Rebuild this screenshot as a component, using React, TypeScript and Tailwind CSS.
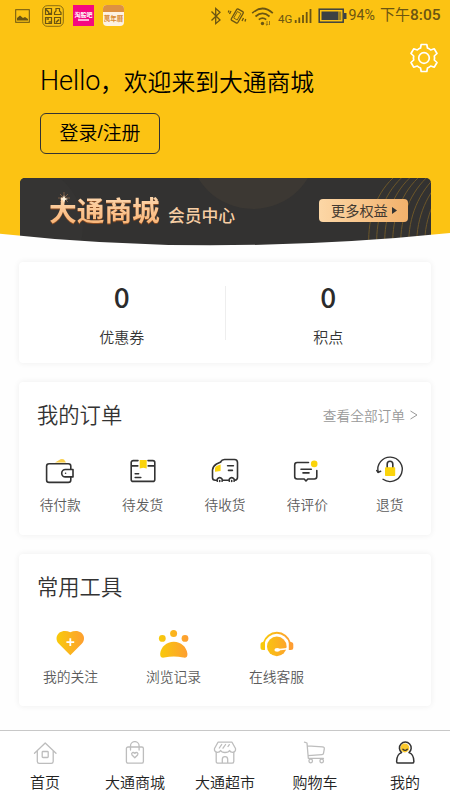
import type { ReactNode } from "react";

const INK = "#333";
const YELLOW = "#fbd40b";

type Item = { label: string; icon: ReactNode };

function OrderIcon({ children }: { children: ReactNode }) {
  return (
    <svg width="32" height="32" viewBox="0 0 32 32" fill="none" stroke={INK} strokeWidth="1.6" strokeLinecap="round" strokeLinejoin="round">
      {children}
    </svg>
  );
}

function ToolIcon({ id, children }: { id: string; children: ReactNode }) {
  return (
    <svg width="36" height="32" viewBox="0 0 36 32" fill={`url(#${id})`}>
      <defs>
        <linearGradient id={id} x1="3" y1="0" x2="33" y2="0" gradientUnits="userSpaceOnUse">
          <stop offset="0" stopColor="#f8cb0a" />
          <stop offset="1" stopColor="#fe9c33" />
        </linearGradient>
      </defs>
      {children}
    </svg>
  );
}

function NavIcon({ color = "#bdbdbd", children }: { color?: string; children: ReactNode }) {
  return (
    <svg width="24" height="24" viewBox="0 0 24 24" fill="none" stroke={color} strokeWidth="1.3" strokeLinecap="round" strokeLinejoin="round">
      {children}
    </svg>
  );
}

const orders: Item[] = [
  {
    label: "待付款",
    icon: (
      <OrderIcon>
        <path d="M11 7.6 16.5 4.2Q18.5 3.4 20 4.6L22 7.6Z" fill="#f9cf4c" stroke="none" />
        <rect x="2.6" y="8.8" width="24.2" height="18.6" rx="2.5" />
        <path d="M29 14.5H21.4a3.7 3.7 0 0 0 0 7.4H29Z" fill="#fff" />
        <circle cx="21.6" cy="18.2" r="0.8" fill={INK} stroke="none" />
      </OrderIcon>
    ),
  },
  {
    label: "待发货",
    icon: (
      <OrderIcon>
        <path d="M11 5.6H6.2a2 2 0 0 0-2 2v16.8a2 2 0 0 0 2 2h19.6a2 2 0 0 0 2-2V7.6a2 2 0 0 0-2-2H21M4.2 10.9H10.8M21.2 10.9H27.8" />
        <path d="M12.7 5H19.7V13.6L16.2 12.8L12.7 13.6Z" fill={YELLOW} stroke="none" />
        <path d="M8.2 18.7h3.4M8.2 22.5h5.6" />
      </OrderIcon>
    ),
  },
  {
    label: "待收货",
    icon: (
      <OrderIcon>
        <path d="M11.6 9.6V16L6 16.8V13Q6.6 11 11.6 9.6Z" fill={YELLOW} stroke="none" />
        <path d="M7.5 25.3H6.3a2.8 2.8 0 0 1-2.8-2.8V15Q4 11 7.5 9L11.8 7V6.7Q12.8 4.5 15.5 4.5H25.5a3 3 0 0 1 3 3V22.3a3 3 0 0 1-2.6 3M13.8 25.3H19.6" />
        <path d="M8.3 26.2a2.6 2.6 0 1 1 4.8 0M20.3 26.2a2.6 2.6 0 1 1 4.8 0" />
        <path d="M10.7 25.5v1M22.7 25.5v1M18.6 10.7h5.8M19.5 15.4h3.9" />
      </OrderIcon>
    ),
  },
  {
    label: "待评价",
    icon: (
      <OrderIcon>
        <path d="M17.5 7.5H6.2a2.5 2.5 0 0 0-2.5 2.5V21.5a2.5 2.5 0 0 0 2.5 2.5H13.2L15 26L16.8 24H23.3a2.5 2.5 0 0 0 2.5-2.5V15.6" />
        <path d="M10 14.3H20.3M12 17.9H18" />
        <circle cx="23.2" cy="8.9" r="3.3" fill={YELLOW} stroke="none" />
      </OrderIcon>
    ),
  },
  {
    label: "退货",
    icon: (
      <OrderIcon>
        <path d="M4.2 17.3A12.2 12.2 0 1 1 9 24.3" strokeWidth="1.4" />
        <path d="M2.8 15.6 4.3 17.4 6.6 16.3" />
        <path d="M13.2 12.5V9a2.8 2.8 0 0 1 5.6 0V12.5" />
        <rect x="11" y="12.3" width="10.2" height="8.8" rx="0.8" fill={YELLOW} stroke="none" />
      </OrderIcon>
    ),
  },
];

const tools: Item[] = [
  {
    label: "我的关注",
    icon: (
      <ToolIcon id="heart">
        <path d="M17.3 4.2C13.8 2.6 9.5 2.4 6.5 4.6C3 7.4 2.5 12.3 5.6 15.5L17.3 27.3L29 15.5C32.1 12.3 31.6 7.4 28.1 4.6C25.1 2.4 20.8 2.6 17.3 4.2Z" />
        <path d="M17.3 10.2v7.8M13.4 14.1h7.8" stroke="#fff" strokeWidth="1.8" />
      </ToolIcon>
    ),
  },
  {
    label: "浏览记录",
    icon: (
      <ToolIcon id="paw">
        <circle cx="6.3" cy="10.4" r="3.4" />
        <circle cx="17.6" cy="5.4" r="3.5" />
        <circle cx="29" cy="10.4" r="3.4" />
        <path d="M17.8 13.7C10.5 13.7 5 18.8 4.2 25.5C3.9 28.8 5.4 30 8.3 29.6Q17.8 27.3 27.3 29.6C30.3 30 31.8 28.8 31.4 25.5C30.5 18.8 25 13.7 17.8 13.7Z" />
      </ToolIcon>
    ),
  },
  {
    label: "在线客服",
    icon: (
      <ToolIcon id="service">
        <circle cx="17.8" cy="18.4" r="9.8" />
        <path d="M4.7 15A13.6 13.6 0 0 1 31 15" fill="none" stroke="url(#service)" strokeWidth="2" />
        <path d="M6 14H4Q1.5 14 1.5 16.5V19.5Q1.5 22 4 22H6ZM29.8 14H31.8Q34.3 14 34.3 16.5V19.5Q34.3 22 31.8 22H29.8Z" />
        <path d="M18 21 28 20.1V21.4L18 22.8Z" fill="#fff" />
        <ellipse cx="18.2" cy="21.9" rx="2.8" ry="1.8" fill="#fff" />
      </ToolIcon>
    ),
  },
];

const tabs: Item[] = [
  {
    label: "首页",
    icon: (
      <NavIcon>
        <path d="M1.5 12.2 12.2 2 23 12.2M4.3 10V20.5a1.8 1.8 0 0 0 1.8 1.8H18.4a1.8 1.8 0 0 0 1.8-1.8V10" />
        <rect x="9.2" y="10.5" width="6" height="6" rx="0.8" />
      </NavIcon>
    ),
  },
  {
    label: "大通商城",
    icon: (
      <NavIcon>
        <rect x="3.4" y="6" width="17" height="16.2" rx="1.6" />
        <path d="M7.5 9V4.9a4.3 4.3 0 0 1 8.6 0V9" />
        <path d="M11.8 16.8 9 14Q8.1 12.5 9.3 11.7Q10.8 11 11.8 12.4Q12.8 11 14.3 11.7Q15.5 12.5 14.6 14Z" />
      </NavIcon>
    ),
  },
  {
    label: "大通超市",
    icon: (
      <NavIcon>
        <path d="M5 1.2H19L22.5 7.5Q23 11 19.8 11.3Q17.3 11.3 16.6 9.5Q15.6 11.5 12 11.5Q8.6 11.5 7.6 9.5Q6.8 11.3 4.3 11.3Q1 11 1.5 7.5Z" />
        <path d="M3.2 11.5V20.4a1.8 1.8 0 0 0 1.8 1.8H19a1.8 1.8 0 0 0 1.8-1.8V11.5M9.3 22V18.4a2.7 2.7 0 0 1 5.4 0V22M6.3 7 8.7 3.5M10 7.2 12.6 3.5M15 5.5 16.3 3.6" />
      </NavIcon>
    ),
  },
  {
    label: "购物车",
    icon: (
      <NavIcon>
        <path d="M1.5 1.2 4 2 5.3 17.3H20.5M4.4 4.8 19.5 5.8Q21.5 6 21.3 7.8L20.5 12.3Q20.3 13.5 19 13.6L5.1 14.7" />
        <circle cx="7.7" cy="20" r="1.8" />
        <circle cx="18.7" cy="20" r="1.8" />
      </NavIcon>
    ),
  },
  {
    label: "我的",
    icon: (
      <NavIcon color="#333">
        <circle cx="11.8" cy="6.9" r="4.5" fill="#fbc92d" stroke="none" />
        <path d="M8.6 11.6A5.9 5.9 0 1 1 16 11.6C19.3 12.7 20.9 16 20.9 20.6Q20.9 22.1 19.4 22.1H5Q3.6 22.1 3.6 20.6C3.6 16 5.4 12.7 8.6 11.6Z" strokeWidth="1.5" />
        <path d="M9.9 8.2Q12.2 10.6 14.3 8.2" />
      </NavIcon>
    ),
  },
];

function StatusBar() {
  return (
    <div className="flex h-[31px] items-center text-[#6b5512]">
      <div className="ml-[15px] flex w-[109px] items-center">
        <svg width="15" height="14" viewBox="0 0 15 14" fill="none">
          <rect x="0.7" y="0.7" width="13.6" height="12.6" stroke="currentColor" />
          <path d="M2 11.5V9L5 6.5 8 9 10 8 13 10V11.5Z" fill="currentColor" />
        </svg>
        <svg className="ml-[12px]" width="22" height="22" viewBox="0 0 22 22" fill="none" stroke="currentColor">
          <rect x="0.7" y="0.7" width="20.6" height="20.6" rx="4.5" strokeWidth="0.8" />
          <path d="M3.5 3.5h6v6h-6zM12.5 9.5v-2l1.500-1.500v-2.500h3.500v2.500l1.500 1.500v2zM3.5 12.5h6v6h-6zM12.5 12.5h6v6h-6z" strokeWidth="1.2" />
          <path d="M4 4.5 7 7.5M6 8.5H9M4.5 14h2.5M6.5 17H9M14 17.5l3-3" strokeWidth="1.7" />
        </svg>
        <div className="ml-[9px] flex h-[21px] w-[21px] flex-col items-center justify-center bg-[#f5087f] text-white">
          <span className="text-[6px] leading-[7px] font-bold whitespace-nowrap">淘股吧</span>
          <span className="mt-px h-[2px] w-[11px] bg-white/70" />
        </div>
        <div className="ml-[9px] flex h-[21px] w-[21px] shrink-0 flex-col overflow-hidden rounded-[4px] bg-[#fdf2e2]">
          <span className="h-[7px] bg-[#dd9142]" />
          <span className="text-center text-[6.5px] leading-[13px] font-bold whitespace-nowrap text-[#d98a35]">萬年曆</span>
        </div>
      </div>
      <svg className="ml-[86px]" width="102" height="24" viewBox="210 3 102 24" fill="none" stroke="currentColor" strokeWidth="1.3">
        <path d="M211.5 10.5 220 19 215.7 22.7V7.5L220 11.2 211.5 19.5" />
        <rect x="233.5" y="8.5" width="7.5" height="13" rx="1.2" transform="rotate(30 237.2 15)" />
        <rect x="235.2" y="11" width="4" height="7.5" transform="rotate(30 237.2 15)" strokeWidth="0.8" />
        <path d="M231 10 229.5 13M229 9.5 228.3 11.5M243.5 17 242 20M245.7 18 245 20.5" />
        <path d="M252.2 12.2Q262.5 2.8 272.8 12.2M255.5 15.5Q262.5 9.2 269.5 15.5M258.8 18.7Q262.5 15.6 266.2 18.7" strokeWidth="1.7" />
        <circle cx="262.5" cy="22.5" r="1.7" fill="currentColor" stroke="none" />
        <path d="M267 20v4M265.7 23l1.3 1.3 1.3-1.3M269.5 24v-4" strokeWidth="0.7" />
        <text x="278" y="22" fontSize="11.5" fontFamily="Roboto" fill="currentColor" stroke="none">4G</text>
        <path d="M295.7 22v-3M299.3 22v-5.5M303 22v-8M306.7 22v-11M310.5 22v-14" strokeWidth="1.8" />
      </svg>
      <svg className="ml-[5.5px] text-[#3c4143]" width="29" height="16" viewBox="0 0 29 16" fill="none">
        <rect x="1.2" y="1.2" width="24" height="13" stroke="currentColor" strokeWidth="1.5" />
        <path d="M3.5 3.5h17v8.5h-17zM26 5h2.5v6H26z" fill="currentColor" />
        <path d="M20.5 3.5h2.7v8.5h-2.7z" fill="#9d8228" />
      </svg>
      <span className="ml-[2px] w-[31.5px] font-[Roboto] text-[14.2px] whitespace-nowrap">94%</span>
      <span className="font-[Roboto,'Noto_Sans_CJK_SC',sans-serif] text-[15px] whitespace-nowrap">
        下午<span className="text-[15.5px] font-medium">8:05</span>
      </span>
    </div>
  );
}

function Banner() {
  return (
    <div className="relative mx-[20px] flex h-[72px] w-[411px] items-start overflow-hidden rounded-t-[5px] bg-[#333231]">
      <svg className="absolute inset-0" width="411" height="72" viewBox="0 0 411 72" fill="none">
        <circle cx="233" cy="-33.3" r="64.3" fill="#3c3833" />
        <circle cx="2" cy="48" r="61" fill="#353433" />
        <g stroke="#6d572a" strokeWidth="1">
          {[0, 1, 2, 3, 4, 5, 6, 7].map((n) => (
            <path key={n} d={`M${349 + n * 8} 72C${347 + n * 8} 44 ${354 + n * 8.5} 18 ${373 + n * 8.3} 0`} />
          ))}
        </g>
        <path d="M44 14v12M38 20h12M40 16l8 8M48 16l-8 8" stroke="#c38355" strokeWidth="0.5" />
      </svg>
      <span className="relative mt-[13px] ml-[29px] w-[119px] bg-linear-to-b from-[#fddcb6] to-[#f8b272] bg-clip-text text-[27.7px] leading-[36px] font-bold whitespace-nowrap text-transparent drop-shadow-[0_1px_0_#8a4c22]">
        大通商城
      </span>
      <span className="relative mt-[26px] w-[68px] text-[16.8px] leading-[22px] font-medium whitespace-nowrap text-[#f7cea4]">会员中心</span>
      <button className="relative mt-[21px] ml-[83px] flex h-[23px] w-[89px] items-center rounded-[4px] bg-linear-to-r from-[#fcd7a6] to-[#f2b16b] pb-px pl-[12px] text-[14.2px] leading-[22px] whitespace-nowrap text-[#433a31]">
        更多权益
        <svg className="ml-[4px]" width="5" height="7" viewBox="0 0 5 7" fill="#333">
          <path d="M0 0 5 3.5 0 7Z" />
        </svg>
      </button>
      <svg className="absolute top-[17px] left-[40px]" width="8" height="8" viewBox="0 0 8 8">
        <path d="M4 0 5 3 8 4 5 5 4 8 3 5 0 4 3 3Z" fill="#fff3df" />
      </svg>
    </div>
  );
}

function Header() {
  return (
    <header className="relative h-[248px] overflow-hidden bg-[#fcc313]">
      <StatusBar />
      <div className="flex h-[147px] flex-col items-start pl-[40px] text-black">
        <h1 className="mt-[32px] flex h-[36px] items-center text-[23.8px] font-[350] whitespace-nowrap">
          <span className="w-[60px] font-[Roboto] text-[27px] font-light">Hello</span>，欢迎来到大通商城
        </h1>
        <button className="mt-[14px] flex h-[41px] w-[120px] items-center justify-center rounded-[6px] border border-[#333] pb-[2px] text-[18.9px] leading-none font-[350]">
          登录<span className="font-['Liberation_Sans']">/</span>注册
        </button>
      </div>
      <Banner />
      <svg className="absolute top-[42px] right-[11px]" width="30" height="32" viewBox="-15 -16 30 32" fill="none" stroke="#fff" strokeWidth="1.7" strokeLinejoin="round">
        <circle r="5.3" />
        <path d="M-2.8 -13.5H2.8L3.5 -10Q5.5 -9.2 6.7 -8L10.3 -9.2L13 -4.5L10.3 -2Q10.8 0 10.3 2L13 4.5L10.3 9.2L6.7 8Q5.5 9.2 3.5 10L2.8 13.5H-2.8L-3.5 10Q-5.5 9.2 -6.7 8L-10.3 9.2L-13 4.5L-10.3 2Q-10.8 0 -10.3 -2L-13 -4.5L-10.3 -9.2L-6.7 -8Q-5.5 -9.2 -3.5 -10Z" />
      </svg>
      <svg className="absolute bottom-0 left-0" width="450" height="15" viewBox="0 0 450 15">
        <path d="M0 0.8Q105 12.3 210 12.3Q330 12.3 450 0V15H0Z" fill="#fefefe" />
      </svg>
    </header>
  );
}

function Card({ className, children }: { className: string; children: ReactNode }) {
  return <section className={`mx-[19px] rounded-[4px] bg-white shadow-[0_0_6px_rgba(0,0,0,0.07)] ${className}`}>{children}</section>;
}

export default function App() {
  return (
    <div className="flex h-[800px] w-[450px] flex-col overflow-hidden bg-[#fefefe] font-['Noto_Sans_CJK_SC',sans-serif] text-[#333]">
      <Header />
      <Card className="mt-[14px] flex h-[101px] items-center">
        {["优惠券", "积点"].map((label, i) => (
          <div key={label} className={`flex h-[54px] flex-1 flex-col items-center justify-center ${i ? "border-l border-[#eee]" : ""}`}>
            <span className="text-[28px] leading-[34px] font-medium text-[#2b2b2b]">0</span>
            <span className="mt-[14px] text-[15px] leading-[20px] font-[350]">{label}</span>
          </div>
        ))}
      </Card>
      <Card className="mt-[19px] h-[153px]">
        <div className="flex h-[66px] items-center justify-between pr-[13px] pl-[18px]">
          <h2 className="pb-[2px] text-[21.3px] font-[350]">我的订单</h2>
          <a className="flex items-center text-[13.7px] font-[350] text-[#999]">
            查看全部订单
            <svg className="ml-[5px]" width="8" height="10" viewBox="0 0 8 10" fill="none" stroke="#999">
              <path d="M0.5 1 7 5 0.5 9" />
            </svg>
          </a>
        </div>
        <div className="mt-[7px] grid grid-cols-5">
          {orders.map((item) => (
            <div key={item.label} className="flex flex-col items-center">
              {item.icon}
              <span className="mt-[7px] text-[13.7px] leading-[20px] font-[350] text-[#5c5c5c]">{item.label}</span>
            </div>
          ))}
        </div>
      </Card>
      <Card className="mt-[19px] h-[152px]">
        <h2 className="flex h-[66px] items-center pb-[2px] pl-[18px] text-[21.3px] font-[350]">常用工具</h2>
        <div className="mt-[8px] grid grid-cols-4">
          {tools.map((item) => (
            <div key={item.label} className="flex flex-col items-center">
              {item.icon}
              <span className="mt-[6px] text-[13.8px] leading-[20px] font-[350] text-[#5c5c5c]">{item.label}</span>
            </div>
          ))}
        </div>
      </Card>
      <nav className="mt-auto grid h-[70px] grid-cols-5 border-t border-[#c8c8c8] bg-white">
        {tabs.map((item) => (
          <div key={item.label} className="flex flex-col items-center pt-[10px]">
            {item.icon}
            <span className="mt-[7px] text-[15px] leading-[20px] font-[350] whitespace-nowrap text-[#222]">{item.label}</span>
          </div>
        ))}
      </nav>
    </div>
  );
}
